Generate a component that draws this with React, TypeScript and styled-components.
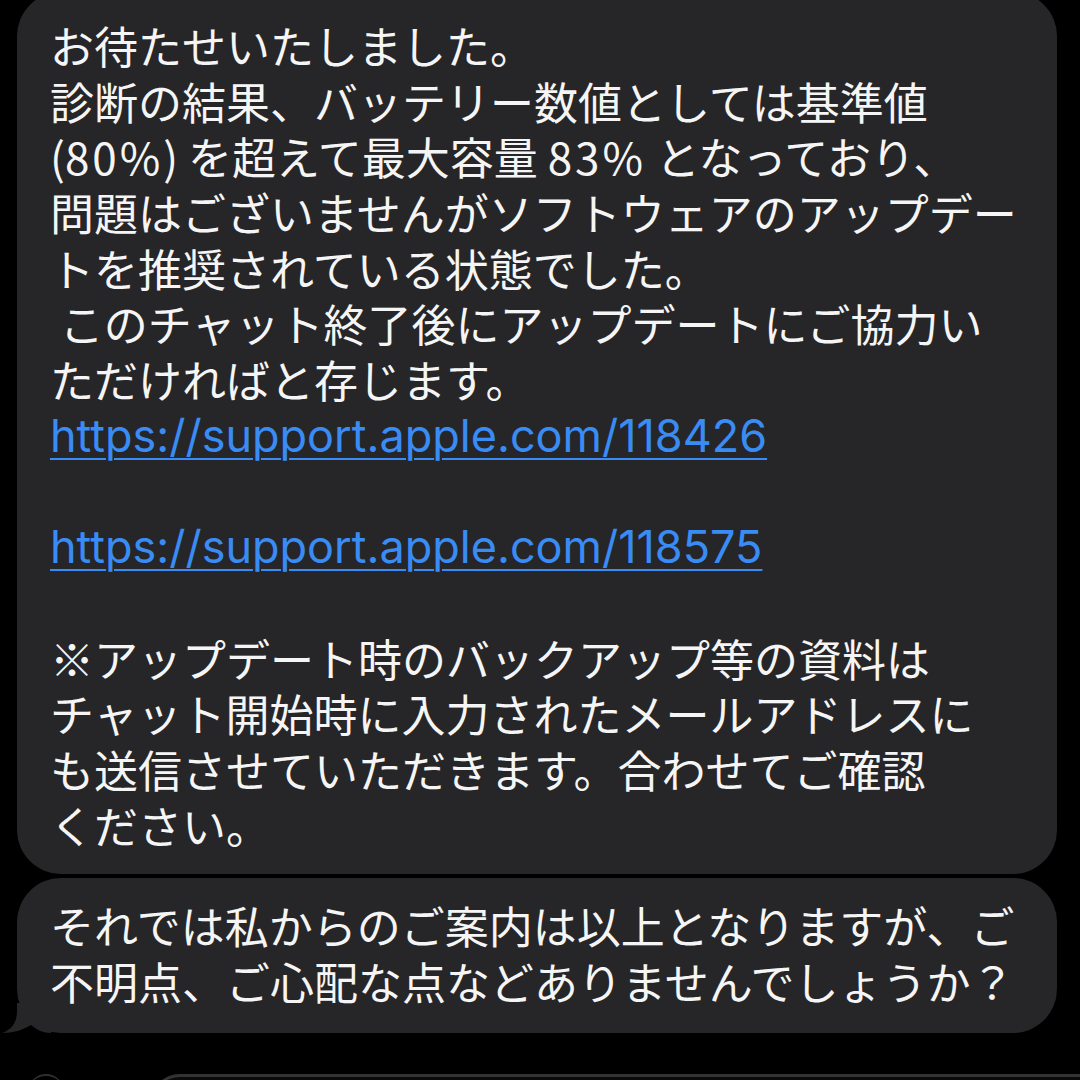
import React from "react";
import styled, { createGlobalStyle } from "styled-components";

const GlobalStyle = createGlobalStyle`
  html, body {
    margin: 0;
    padding: 0;
    background: #000;
  }
  body {
    font-family: "Noto Sans CJK JP", "Noto Sans", sans-serif;
    -webkit-font-smoothing: antialiased;
  }
`;

const Screen = styled.div`
  width: 1080px;
  height: 1080px;
  overflow: hidden;
  background: #000;
  display: flex;
  flex-direction: column;
`;

const Thread = styled.div`
  display: flex;
  flex-direction: column;
  gap: 4px;
  margin-top: -8px;
  padding: 0 23px 0 17px;
`;

const Bubble = styled.div<{ $pt: number; $pb: number }>`
  position: relative;
  background: #262628;
  border-radius: 44px;
  padding: ${(p) => p.$pt}px 30px ${(p) => p.$pb}px 33px;
  color: #f5f5f5;
`;

const Line = styled.div`
  height: 55.7px;
  line-height: 55.7px;
  font-size: 44px;
  white-space: pre;
  font-family: "Noto Sans CJK JP", sans-serif;
  letter-spacing: 0;
`;

const Num = styled.span`
  letter-spacing: 3px;
`;

const LinkLine = styled.a`
  display: block;
  height: 55.7px;
  line-height: 55.7px;
  font-family: "Inter", "Liberation Sans", sans-serif;
  font-size: 45px;
  color: #3a8cf5;
  text-decoration: underline;
  text-decoration-thickness: 2px;
  text-underline-offset: 6px;
  white-space: pre;
`;

const Tail = styled.svg`
  position: absolute;
  left: -16px;
  bottom: 0;
  width: 50px;
  height: 30px;
  display: block;
`;

const InputRow = styled.div`
  display: flex;
  align-items: flex-start;
  gap: 86px;
  margin-top: 41px;
  padding-left: 28px;
`;

const CircleButton = styled.div`
  width: 36px;
  height: 36px;
  border-radius: 50%;
  border-top: 2px solid #2e2e30;
  box-sizing: border-box;
  flex: none;
`;

const Field = styled.div`
  flex: 1;
  height: 60px;
  border: 3px solid #333335;
  border-right: none;
  border-radius: 30px 0 0 30px;
  background: #0a0a0a;
`;

type Item = { text: React.ReactNode } | { link: string };

const first: Item[] = [
  { text: "お待たせいたしました。" },
  { text: "診断の結果、バッテリー数値としては基準値" },
  {
    text: (
      <>
        (<Num>80%</Num>) を超えて最大容量 <Num>83%</Num> となっており、
      </>
    ),
  },
  { text: "問題はございませんがソフトウェアのアップデー" },
  { text: "トを推奨されている状態でした。" },
  { text: " このチャット終了後にアップデートにご協力い" },
  { text: "ただければと存じます。" },
  { link: "https://support.apple.com/118426" },
  { text: "" },
  { link: "https://support.apple.com/118575" },
  { text: "" },
  { text: "※アップデート時のバックアップ等の資料は" },
  { text: "チャット開始時に入力されたメールアドレスに" },
  { text: "も送信させていただきます。合わせてご確認" },
  { text: "ください。" },
];

const second = [
  "それでは私からのご案内は以上となりますが、ご",
  "不明点、ご心配な点などありませんでしょうか？",
];

export default function App() {
  return (
    <Screen>
      <GlobalStyle />
      <Thread>
        <Bubble $pt={26} $pb={21}>
          {first.map((l, i) =>
            "link" in l ? (
              <LinkLine key={i} href={l.link}>
                {l.link}
              </LinkLine>
            ) : (
              <Line key={i}>{l.text}</Line>
            )
          )}
        </Bubble>
        <Bubble $pt={20} $pb={23}>
          {second.map((l, i) => (
            <Line key={i}>{l}</Line>
          ))}
          <Tail viewBox="0 0 50 30" aria-hidden="true">
            <path
              d="M16 0 L16 8 C16 20 10 27 1 30 C12 30 22 27 30 22 C36 27 42 30 50 30 L50 0 Z"
              fill="#262628"
            />
          </Tail>
        </Bubble>
      </Thread>
      <InputRow>
        <CircleButton />
        <Field />
      </InputRow>
    </Screen>
  );
}
